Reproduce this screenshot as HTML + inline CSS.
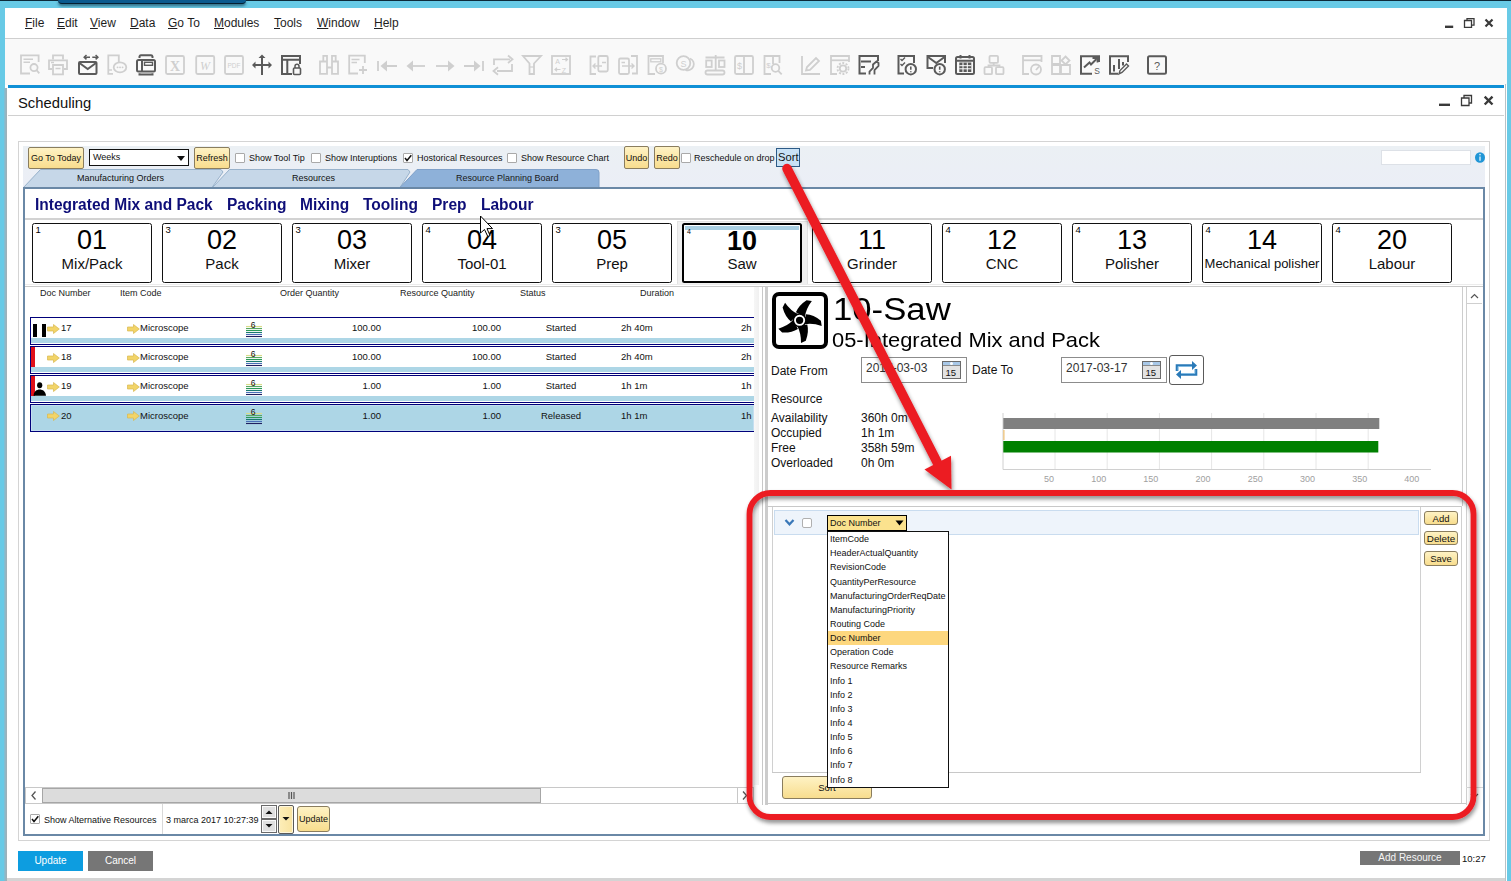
<!DOCTYPE html>
<html><head><meta charset="utf-8">
<style>
*{box-sizing:border-box;margin:0;padding:0}
html,body{width:1511px;height:881px;overflow:hidden;background:#68cae6;font-family:"Liberation Sans",sans-serif;color:#000}
.a{position:absolute}
.t{position:absolute;white-space:nowrap;line-height:1;color:#111}
.menu span{position:absolute;top:17px;font-size:12px;color:#1e1e1e;line-height:1}
.menu u{text-decoration:underline;text-underline-offset:1px;text-decoration-thickness:1px}
.ybtn{position:absolute;background:linear-gradient(#fef2c4,#f8dd8e);border:1px solid #8a7d5e;border-radius:2px;font-size:9px;text-align:center;color:#111}
.cb{position:absolute;width:10px;height:10px;border:1px solid #a9a9a9;background:#fff;border-radius:1px}
.card{position:absolute;top:223px;width:120px;height:60px;border:1px solid #111;border-radius:2.5px;background:#fff}
.card .n{position:absolute;left:2.5px;top:1px;font-size:9.5px;line-height:1}
.card .big{position:absolute;left:0;right:0;top:2.5px;text-align:center;font-size:27px;line-height:1}
.card .sub{position:absolute;left:0;right:0;top:31.5px;text-align:center;font-size:15px;line-height:1;color:#111}
.hdr{position:absolute;top:288.8px;font-size:9px;line-height:1;color:#222}
.row{position:absolute;left:30px;width:724px;height:28px;border:1px solid #00007a;border-right:none;background:#fff}
.row .strip{position:absolute;left:0;right:0;top:20px;height:5px;background:#add6e6}
.row span{position:absolute;top:7px;font-size:9px;line-height:1;color:#111}
.gt{position:absolute;top:197px;font-size:16px;font-weight:bold;color:#0e0e78;line-height:1;transform:scaleX(0.97);transform-origin:0 0;white-space:nowrap}
.rp{font-size:12px;color:#111}
.tx{font-size:9.5px;color:#111}
.lst span{position:absolute;left:830px;font-size:9px;line-height:1;color:#111}
</style></head><body>

<!-- app frame -->
<div class="a" style="left:0;top:0;width:1511px;height:1px;background:#0c2a3a"></div>
<div class="a" style="left:58px;top:0;width:188px;height:4px;background:#0b5a8e;border-radius:0 0 4px 4px;border-bottom:1px solid #042033;box-shadow:0 2px 3px rgba(0,30,50,0.55)"></div>
<div class="a" style="left:5px;top:8px;width:1501.5px;height:873px;background:#fff"></div>

<!-- menu -->
<div class="menu">
<span style="left:25px"><u>F</u>ile</span>
<span style="left:57px"><u>E</u>dit</span>
<span style="left:90px"><u>V</u>iew</span>
<span style="left:130px"><u>D</u>ata</span>
<span style="left:168px"><u>G</u>o To</span>
<span style="left:214px"><u>M</u>odules</span>
<span style="left:274px"><u>T</u>ools</span>
<span style="left:317px"><u>W</u>indow</span>
<span style="left:374px"><u>H</u>elp</span>
</div>
<div class="a" style="left:5px;top:38px;width:1502px;height:1px;background:#cfcfcf"></div>
<div class="a" style="left:5px;top:39px;width:1502px;height:46px;background:#f9f9f9"></div>
<div class="a" style="left:8px;top:85px;width:1496px;height:3px;background:#1090d6"></div>

<!-- toolbar icons placeholder -->
<svg class="a" style="left:0;top:0" width="1200" height="85" viewBox="0 0 1200 85" fill="none" stroke-linecap="butt">
<g stroke="#cfcfcf" stroke-width="1.8">
 <!-- 1 doc search -->
 <path d="M30 73.5H21V55.3H38.6V62"/><path d="M23.5 59.2H33M23.5 62.2H30" stroke-width="1.5"/>
 <circle cx="34" cy="67.6" r="3.6"/><path d="M36.6 70.2L39.3 73.3"/>
 <!-- 2 printer -->
 <path d="M53 59.5V55.3H63V59.5"/><path d="M52 69H49V60.3H67V69H64"/><path d="M53 65H63V74.3H53Z"/><path d="M55.5 68.5H60.5M51 62.5H54" stroke-width="1.4"/>
 <!-- 4 phone chat -->
 <path d="M118.8 62V55.4H108.3V73.8H113"/><path d="M108.5 70H112" stroke-width="1.4"/>
 <ellipse cx="120" cy="67.3" rx="6.3" ry="5"/><path d="M117.5 67.3h0.1M120 67.3h0.1M122.5 67.3h0.1" stroke-width="1.8" stroke-linecap="round"/>
 <!-- 6 excel -->
 <rect x="166" y="56" width="18" height="18" rx="1.5"/>
 <!-- 7 word -->
 <rect x="196.2" y="56" width="18" height="18" rx="1.5"/>
 <!-- 8 pdf -->
 <rect x="225" y="56" width="18" height="18" rx="1.5"/>
 <!-- 11 binoculars -->
 <path d="M320 61.5H327V73.8H320ZM332 61.5H338V73.8H332ZM323.3 55.8H327V61.5H323.3ZM332 55.8H335.7V61.5H332ZM327 67.5H332"/>
 <!-- 12 doc plus -->
 <path d="M358 73.5H349.2V55.6H364.8V63"/><path d="M351.5 59.5H359.5M351.5 62.5H357" stroke-width="1.5"/><path d="M359 70H367M363 66V74"/>
 <!-- 13 first -->
 <path d="M378 61V71M386 66H397"/><path d="M380.5 66L387 60.5V71.5Z" fill="#cfcfcf" stroke="none"/>
 <!-- 14 prev -->
 <path d="M412 66H425"/><path d="M406.5 66L413 60.5V71.5Z" fill="#cfcfcf" stroke="none"/>
 <!-- 15 next -->
 <path d="M436 66H449"/><path d="M454.5 66L448 60.5V71.5Z" fill="#cfcfcf" stroke="none"/>
 <!-- 16 last -->
 <path d="M464 66H475M483 61V71"/><path d="M480.5 66L474 60.5V71.5Z" fill="#cfcfcf" stroke="none"/>
 <!-- 17 refresh -->
 <path d="M494 65V59.3H510M512 64V71H497"/><path d="M508 55.5L512.5 59.3L508 63M498 67.3L493.5 71L498 74.8" />
 <!-- 18 funnel -->
 <path d="M523 56H541L534 63.5V74H529.5V63.5Z"/><path d="M529.5 67H534" stroke-width="1.2"/>
 <!-- 19 A-Z -->
 <rect x="552" y="56" width="18" height="18"/>
 <!-- 20 doc left -->
 <path d="M596 56.5H590.5V74H596"/><rect x="598.3" y="56" width="9.5" height="15.5" rx="1.5"/><path d="M593 66H602M602 62.5H606M595.5 63.5L593 66L595.5 68.5" stroke-width="1.4"/>
 <!-- 21 doc right -->
 <path d="M631 56H637V73.5H632"/><rect x="619" y="58.5" width="10" height="15.5" rx="1.5"/><path d="M622 66H634M621.5 62.5H625M631.5 63.5L634 66L631.5 68.5" stroke-width="1.4"/>
 <!-- 22 doc $ -->
 <path d="M655 74H648.5V56H663V63"/><rect x="650.8" y="58.8" width="10" height="3" stroke-width="1.3"/><circle cx="661" cy="68.7" r="5"/>
 <!-- 23 coins -->
 <circle cx="683.5" cy="63" r="6.8"/><path d="M685.5 69.8A5.5 5.5 0 1 0 690 58.5" transform="translate(0,0)"/>
 <!-- 24 scale -->
 <rect x="705.5" y="70.5" width="19" height="4" rx="2"/><path d="M715.7 55V70.5M705.5 57.5H724.5"/><rect x="706.2" y="60.5" width="5.5" height="6.5"/><rect x="719" y="60.5" width="5.5" height="6.5"/>
 <!-- 25 $ book -->
 <rect x="735" y="56" width="18" height="18" rx="1.5"/><path d="M744 56V74"/>
 <!-- 26 $ search -->
 <path d="M771 74H764.5V56H779.5V63"/><path d="M773 56V64"/><circle cx="775.5" cy="68" r="3.8"/><path d="M778.3 70.8L781.7 74.3"/>
 <!-- 27 pencil -->
 <path d="M802 56V74H820"/><path d="M806 70.5L807 67L816 58L819 61L810 70Z"/>
 <!-- 28 window gear -->
 <path d="M837 74H831V56H849V62"/><path d="M831 60.3H849"/><circle cx="843" cy="68.5" r="3.2"/><circle cx="843" cy="68.5" r="5.5" stroke-dasharray="2 1.5"/>
 <!-- 33 hierarchy -->
 <rect x="989.5" y="55.8" width="8.5" height="7" rx="1"/><rect x="984.5" y="67.2" width="7.5" height="7" rx="1"/><rect x="996" y="67.2" width="7.5" height="7" rx="1"/><path d="M993.7 63V65.5H988.5V67M993.7 65.5H999.5V67"/>
 <!-- 34 window gauge -->
 <path d="M1029 74H1023V56H1041.5V62"/><path d="M1023 60.3H1041.5"/><circle cx="1036" cy="69.5" r="5"/><path d="M1036 70L1039 66.5"/>
 <!-- 35 widgets -->
 <path d="M1052 56H1060V64H1052ZM1052 65H1060V74H1052ZM1061 65H1070V74H1061Z"/><path d="M1065.5 56.5L1069.5 60.5L1065.5 64.5L1061.5 60.5Z"/>
</g>
<g stroke="#5a5a5a" stroke-width="2">
 <!-- 3 mail -->
 <rect x="79" y="62" width="17.5" height="12" rx="1"/><path d="M79.5 63L87.7 69L96 63"/>
 <path d="M84 57.2H90M92.3 57.2H98" stroke-width="1.5"/><path d="M86.5 55L84.2 57.2L86.5 59.4M95.6 55L97.9 57.2L95.6 59.4" stroke-width="1.5"/>
 <!-- 5 preview -->
 <rect x="137" y="60" width="18" height="11.5" rx="1.5"/><path d="M142 60V71.5"/><rect x="144.5" y="62.3" width="8" height="3" stroke-width="1.4"/><path d="M139.5 58V56.5A1.5 1.5 0 0 1 141 55.3H151A1.5 1.5 0 0 1 152.5 56.5V58M139.5 73.2V74.5H152.5V73.2"/>
 <!-- 9 move -->
 <path d="M262 56V75M253 65H271"/><path d="M262 54.5L258.5 58H265.5ZM252 65L255.5 61.5V68.5ZM272 65L268.5 61.5V68.5Z" fill="#5a5a5a" stroke="none"/>
 <!-- 10 layout lock -->
 <path d="M292 74H282V56H300V64"/><path d="M282 59.8H300M287.3 59.8V74"/><rect x="293.5" y="68" width="7" height="6.5" rx="1" stroke-width="1.6"/><path d="M295 68V66.3A2 2 0 0 1 299 66.3V68" stroke-width="1.5"/>
 <!-- 29 form wrench -->
 <path d="M865 56H878V61M866 73.5H859.5V56H866M861 61.5H871M861 67H865" />
 <path d="M869.5 74.5V71.5L873 68V64.5L876.5 61.5L878.5 63V66L874.5 70V74.5" stroke-width="1.8"/>
 <!-- 30 checklist alert -->
 <path d="M904 73.5H898.5V56H914V63"/><path d="M900.5 59L902 60.5L905 57.5M900.5 64L902 65.5L905 62.5" stroke-width="1.4"/><circle cx="910.8" cy="69.2" r="5.2"/><path d="M910.8 66.5V69.8M910.8 71.2V72.2" stroke-width="1.6"/>
 <!-- 31 mail alert -->
 <path d="M933 68H927.5V56H945V63"/><path d="M928 57L936.3 63L944.5 57"/><circle cx="939.7" cy="69.2" r="5.2"/><path d="M939.7 66.5V69.8M939.7 71.2V72.2" stroke-width="1.6"/>
 <!-- 32 calendar -->
 <rect x="956" y="57" width="18" height="17" rx="1.5"/><path d="M960.5 55V58.5M969.5 55V58.5M957 60.8H973"/><rect x="959.3" y="62.5" width="12" height="9.5" fill="#5a5a5a" stroke="none"/>
 <!-- 36 chart S -->
 <path d="M1092 73.7H1081V56.2H1099V62"/><path d="M1084 67.5L1089.5 62.5L1091 64.5L1096.5 59"/><path d="M1092.5 58H1097.5V62.5" stroke-width="1.8"/>
 <!-- 37 chart edit -->
 <path d="M1118 73.7H1110V56.2H1128V62"/><path d="M1114 65V71.5M1119 59V69M1123 62V65.5"/><path d="M1119 74L1120 70.5L1126.5 64L1128.5 66L1122 72.5Z" stroke-width="1.4"/>
 <!-- 38 help -->
 <rect x="1148" y="56.2" width="18" height="17.5" rx="1.5"/>
</g>
<g font-family="Liberation Sans" text-anchor="middle">
 <text x="175" y="71" font-size="14" font-weight="bold" fill="#cfcfcf" font-family="Liberation Serif">X</text>
 <text x="205" y="70" font-size="12" font-style="italic" fill="#cfcfcf" font-family="Liberation Serif">W</text>
 <text x="234" y="68" font-size="6.5" fill="#cfcfcf">PDF</text>
 <text x="557.5" y="64" font-size="7" fill="#cfcfcf">A</text><text x="564" y="72.5" font-size="7" fill="#cfcfcf">Z</text>
 <text x="739.5" y="69" font-size="9" fill="#cfcfcf">$</text>
 <text x="768.5" y="68" font-size="8" fill="#cfcfcf">$</text>
 <text x="683.5" y="66.5" font-size="9" fill="#cfcfcf">S</text>
 <text x="661" y="71.5" font-size="7" fill="#cfcfcf">$</text>
 <text x="1097" y="74" font-size="8.5" fill="#5a5a5a">S</text>
 <text x="1157" y="69.5" font-size="11" fill="#5a5a5a">?</text>
</g>
<g stroke="#cfcfcf" stroke-width="1.2"><path d="M562 59.5H567.5M565.5 57.7L567.5 59.5L565.5 61.3M555 69.5H560.5M557 67.7L555 69.5L557 71.3"/></g>
<g stroke="#fff" stroke-width="1"><path d="M963 62.5V72M967.3 62.5V72M959.3 65.7H971.3M959.3 68.8H971.3"/></g>
</svg>


<!-- Scheduling window -->
<div class="a" style="left:7px;top:88px;width:1497px;height:790px;background:#fff"></div>
<div class="a" style="left:4px;top:88px;width:3px;height:793px;background:linear-gradient(90deg,#7cc0d8,#a6aeb2)"></div>
<div class="t" style="left:18px;top:96px;font-size:14.8px;color:#111">Scheduling</div>
<div class="a" style="left:8px;top:115px;width:1496px;height:1px;background:#d0d0d0"></div>
<div class="a" style="left:7px;top:878px;width:1498px;height:3px;background:#d4d4d4"></div><div class="a" style="left:0;top:84px;width:4px;height:797px;background:#68cae6"></div>


<!-- FORM -->
<div class="a" style="left:18px;top:141px;width:1472px;height:700px;border:1px solid #d4d4d4;background:#fff"></div>
<div class="a" style="left:23px;top:146px;width:1462px;height:42px;background:linear-gradient(#ebf0f4,#ebeef6)"></div>
<div class="ybtn" style="left:28px;top:147px;width:56px;height:22px;line-height:20px">Go To Today</div>
<div class="a" style="left:89px;top:149px;width:100px;height:17px;border:1.5px solid #111;background:#fff"></div>
<div class="t" style="left:93px;top:152.5px;font-size:9px">Weeks</div>
<div class="a" style="left:177px;top:156px;width:0;height:0;border-left:4px solid transparent;border-right:4px solid transparent;border-top:5px solid #111"></div>
<div class="ybtn" style="left:194px;top:147px;width:36px;height:22px;line-height:20px">Refresh</div>
<div class="cb" style="left:235px;top:153px"></div><div class="t" style="left:249px;top:154px;font-size:9px;color:#111">Show Tool Tip</div>
<div class="cb" style="left:311px;top:153px"></div><div class="t" style="left:325px;top:154px;font-size:9px;color:#111">Show Interuptions</div>
<div class="cb" style="left:403px;top:153px"></div><svg class="a" style="left:403px;top:153px" width="10" height="10"><path d="M2 5L4 7.5L8.3 2.3" stroke="#111" stroke-width="1.5" fill="none"/></svg><div class="t" style="left:417px;top:154px;font-size:9px;color:#111">Hostorical Resources</div>
<div class="cb" style="left:507px;top:153px"></div><div class="t" style="left:521px;top:154px;font-size:9px;color:#111">Show Resource Chart</div>
<div class="ybtn" style="left:624px;top:146px;width:25px;height:23px;line-height:23px">Undo</div>
<div class="ybtn" style="left:654px;top:146px;width:26px;height:23px;line-height:23px">Redo</div>
<div class="cb" style="left:681px;top:153px"></div><div class="t" style="left:694px;top:154px;font-size:9px;color:#111">Reschedule on drop</div>
<div class="a" style="left:776px;top:148px;width:24px;height:19px;border:1px solid #2c5a86;background:#c8e1f5"></div>
<div class="t" style="left:778px;top:152px;font-size:11.2px;color:#111">Sort</div>
<div class="a" style="left:1381px;top:150px;width:90px;height:15px;background:#fff;border:1px solid #dde1e7"></div>
<svg class="a" style="left:1474px;top:151px" width="12" height="13" viewBox="0 0 12 13"><ellipse cx="6" cy="6.5" rx="5" ry="5.3" fill="#2196d6"/><circle cx="6" cy="3.6" r="0.9" fill="#cfeaf8"/><path d="M6 5.4V9.8" stroke="#cfeaf8" stroke-width="1.5"/></svg>
<svg class="a" style="left:0;top:0" width="620" height="192" viewBox="0 0 620 192">
 <path d="M23.5 187.5L40.5 169.5H221L223 172L212 187.5Z" fill="#c6d7e8" stroke="#98b2cb" stroke-width="1"/>
 <path d="M212.5 187.5L229.5 169.5H408L410 172L400 187.5Z" fill="#c6d7e8" stroke="#98b2cb" stroke-width="1"/>
 <path d="M400 187.5L417 169.5H596A3 3 0 0 1 599 172.5V187.5Z" fill="#8eb1d9" stroke="#7fa0c8" stroke-width="1"/>
</svg>
<div class="t" style="left:77px;top:174px;font-size:9px;color:#111">Manufacturing Orders</div>
<div class="t" style="left:292px;top:174px;font-size:9px;color:#111">Resources</div>
<div class="t" style="left:456px;top:174px;font-size:9px;color:#1a1a1a">Resource Planning Board</div>
<!-- content panel -->
<div class="a" style="left:23px;top:187px;width:1462px;height:649px;border:2px solid #6a88a6;background:#fff"></div>



<!-- group titles -->
<div class="gt" style="left:35px">Integrated Mix and Pack</div>
<div class="gt" style="left:227px">Packing</div>
<div class="gt" style="left:300px">Mixing</div>
<div class="gt" style="left:363px">Tooling</div>
<div class="gt" style="left:432px">Prep</div>
<div class="gt" style="left:481px">Labour</div>
<div class="a" style="left:25px;top:218px;width:1458px;height:2px;background:#d2d2d2"></div>
<!-- cards -->
<div class="card" style="left:32px"><span class="n">1</span><div class="big">01</div><div class="sub">Mix/Pack</div></div>
<div class="card" style="left:162px"><span class="n">3</span><div class="big">02</div><div class="sub">Pack</div></div>
<div class="card" style="left:292px"><span class="n">3</span><div class="big">03</div><div class="sub">Mixer</div></div>
<div class="card" style="left:422px"><span class="n">4</span><div class="big">04</div><div class="sub">Tool-01</div></div>
<div class="card" style="left:552px"><span class="n">3</span><div class="big">05</div><div class="sub">Prep</div></div>
<div class="a" style="left:677px;top:221px;width:131px;height:64px;background:#f0f0f0;border:1px solid #e2e2e2"></div>
<div class="card" style="left:682px;border:2px solid #000;"><div class="a" style="left:1px;top:1px;right:1px;height:4px;background:#a9cfe2"></div><span class="n" style="left:3px;top:3px;font-size:7px">4</span><div class="big" style="font-weight:bold;top:3px">10</div><div class="sub" style="top:31px">Saw</div></div>
<div class="card" style="left:812px"><div class="big">11</div><div class="sub">Grinder</div></div>
<div class="card" style="left:942px"><span class="n">4</span><div class="big">12</div><div class="sub">CNC</div></div>
<div class="card" style="left:1072px"><span class="n">4</span><div class="big">13</div><div class="sub">Polisher</div></div>
<div class="card" style="left:1202px"><span class="n">4</span><div class="big">14</div><div class="sub" style="font-size:13px;top:33px">Mechanical polisher</div></div>
<div class="card" style="left:1332px"><span class="n">4</span><div class="big">20</div><div class="sub">Labour</div></div>
<div class="a" style="left:25px;top:284px;width:1458px;height:1px;background:#ececec"></div><div class="a" style="left:25px;top:285.6px;width:1458px;height:1.6px;background:#c8c8c8"></div>




<!-- table -->
<div class="hdr" style="left:40px">Doc Number</div>
<div class="hdr" style="left:120px">Item Code</div>
<div class="hdr" style="left:280px">Order Quantity</div>
<div class="hdr" style="left:400px">Resource Quantity</div>
<div class="hdr" style="left:520px">Status</div>
<div class="hdr" style="left:640px">Duration</div>

<div class="row" style="top:317px"><div class="strip"></div></div>
<svg class="a" style="left:47px;top:324px" width="13" height="10" viewBox="0 0 13 10"><defs></defs><path d="M0.5 3H6.5V0.5L12.3 5L6.5 9.5V7H0.5Z" fill="#f2d468" stroke="#d9b850" stroke-width="0.7"/></svg>
<div class="t tx" style="left:61px;top:323px">17</div>
<svg class="a" style="left:127px;top:324px" width="13" height="10" viewBox="0 0 13 10"><defs></defs><path d="M0.5 3H6.5V0.5L12.3 5L6.5 9.5V7H0.5Z" fill="#f2d468" stroke="#d9b850" stroke-width="0.7"/></svg>
<div class="t tx" style="left:140px;top:323px">Microscope</div>
<svg class="a" style="left:246px;top:322px" width="16" height="16" viewBox="0 0 16 16"><path d="M0 4.5H16" stroke="#d9dc8a" stroke-width="1.1"/><path d="M0 6.5H16" stroke="#5aa860" stroke-width="1.1"/><path d="M0 8.5H16" stroke="#2a9a58" stroke-width="1.1"/><path d="M0 10.5H16" stroke="#1a7a70" stroke-width="1.1"/><path d="M0 12.5H16" stroke="#4a70b8" stroke-width="1.1"/><path d="M0 14.5H16" stroke="#202060" stroke-width="1.1"/><text x="7.2" y="6.3" font-size="8.5" text-anchor="middle" font-family="Liberation Sans" fill="#111">6</text></svg>
<div class="t tx" style="left:280px;width:101px;text-align:right;top:323px">100.00</div>
<div class="t tx" style="left:400px;width:101px;text-align:right;top:323px">100.00</div>
<div class="t tx" style="left:521px;width:80px;text-align:center;top:323px">Started</div>
<div class="t tx" style="left:621px;top:323px">2h 40m</div>
<div class="t tx" style="left:741px;top:323px">2h</div>
<div class="row" style="top:346px"><div class="strip"></div></div>
<svg class="a" style="left:47px;top:353px" width="13" height="10" viewBox="0 0 13 10"><defs></defs><path d="M0.5 3H6.5V0.5L12.3 5L6.5 9.5V7H0.5Z" fill="#f2d468" stroke="#d9b850" stroke-width="0.7"/></svg>
<div class="t tx" style="left:61px;top:352px">18</div>
<svg class="a" style="left:127px;top:353px" width="13" height="10" viewBox="0 0 13 10"><defs></defs><path d="M0.5 3H6.5V0.5L12.3 5L6.5 9.5V7H0.5Z" fill="#f2d468" stroke="#d9b850" stroke-width="0.7"/></svg>
<div class="t tx" style="left:140px;top:352px">Microscope</div>
<svg class="a" style="left:246px;top:351px" width="16" height="16" viewBox="0 0 16 16"><path d="M0 4.5H16" stroke="#d9dc8a" stroke-width="1.1"/><path d="M0 6.5H16" stroke="#5aa860" stroke-width="1.1"/><path d="M0 8.5H16" stroke="#2a9a58" stroke-width="1.1"/><path d="M0 10.5H16" stroke="#1a7a70" stroke-width="1.1"/><path d="M0 12.5H16" stroke="#4a70b8" stroke-width="1.1"/><path d="M0 14.5H16" stroke="#202060" stroke-width="1.1"/><text x="7.2" y="6.3" font-size="8.5" text-anchor="middle" font-family="Liberation Sans" fill="#111">6</text></svg>
<div class="t tx" style="left:280px;width:101px;text-align:right;top:352px">100.00</div>
<div class="t tx" style="left:400px;width:101px;text-align:right;top:352px">100.00</div>
<div class="t tx" style="left:521px;width:80px;text-align:center;top:352px">Started</div>
<div class="t tx" style="left:621px;top:352px">2h 40m</div>
<div class="t tx" style="left:741px;top:352px">2h</div>
<div class="row" style="top:375px"><div class="strip"></div></div>
<svg class="a" style="left:47px;top:382px" width="13" height="10" viewBox="0 0 13 10"><defs></defs><path d="M0.5 3H6.5V0.5L12.3 5L6.5 9.5V7H0.5Z" fill="#f2d468" stroke="#d9b850" stroke-width="0.7"/></svg>
<div class="t tx" style="left:61px;top:381px">19</div>
<svg class="a" style="left:127px;top:382px" width="13" height="10" viewBox="0 0 13 10"><defs></defs><path d="M0.5 3H6.5V0.5L12.3 5L6.5 9.5V7H0.5Z" fill="#f2d468" stroke="#d9b850" stroke-width="0.7"/></svg>
<div class="t tx" style="left:140px;top:381px">Microscope</div>
<svg class="a" style="left:246px;top:380px" width="16" height="16" viewBox="0 0 16 16"><path d="M0 4.5H16" stroke="#d9dc8a" stroke-width="1.1"/><path d="M0 6.5H16" stroke="#5aa860" stroke-width="1.1"/><path d="M0 8.5H16" stroke="#2a9a58" stroke-width="1.1"/><path d="M0 10.5H16" stroke="#1a7a70" stroke-width="1.1"/><path d="M0 12.5H16" stroke="#4a70b8" stroke-width="1.1"/><path d="M0 14.5H16" stroke="#202060" stroke-width="1.1"/><text x="7.2" y="6.3" font-size="8.5" text-anchor="middle" font-family="Liberation Sans" fill="#111">6</text></svg>
<div class="t tx" style="left:280px;width:101px;text-align:right;top:381px">1.00</div>
<div class="t tx" style="left:400px;width:101px;text-align:right;top:381px">1.00</div>
<div class="t tx" style="left:521px;width:80px;text-align:center;top:381px">Started</div>
<div class="t tx" style="left:621px;top:381px">1h 1m</div>
<div class="t tx" style="left:741px;top:381px">1h</div>
<div class="row" style="top:404px;background:#add6e6;box-shadow:inset 0 0 0 1px #c4def0"></div>
<svg class="a" style="left:47px;top:411px" width="13" height="10" viewBox="0 0 13 10"><defs></defs><path d="M0.5 3H6.5V0.5L12.3 5L6.5 9.5V7H0.5Z" fill="#f2d468" stroke="#d9b850" stroke-width="0.7"/></svg>
<div class="t tx" style="left:61px;top:411px">20</div>
<svg class="a" style="left:127px;top:411px" width="13" height="10" viewBox="0 0 13 10"><defs></defs><path d="M0.5 3H6.5V0.5L12.3 5L6.5 9.5V7H0.5Z" fill="#f2d468" stroke="#d9b850" stroke-width="0.7"/></svg>
<div class="t tx" style="left:140px;top:411px">Microscope</div>
<svg class="a" style="left:246px;top:409px" width="16" height="16" viewBox="0 0 16 16"><path d="M0 4.5H16" stroke="#d9dc8a" stroke-width="1.1"/><path d="M0 6.5H16" stroke="#5aa860" stroke-width="1.1"/><path d="M0 8.5H16" stroke="#2a9a58" stroke-width="1.1"/><path d="M0 10.5H16" stroke="#1a7a70" stroke-width="1.1"/><path d="M0 12.5H16" stroke="#4a70b8" stroke-width="1.1"/><path d="M0 14.5H16" stroke="#202060" stroke-width="1.1"/><text x="7.2" y="6.3" font-size="8.5" text-anchor="middle" font-family="Liberation Sans" fill="#111">6</text></svg>
<div class="t tx" style="left:280px;width:101px;text-align:right;top:411px">1.00</div>
<div class="t tx" style="left:400px;width:101px;text-align:right;top:411px">1.00</div>
<div class="t tx" style="left:521px;width:80px;text-align:center;top:411px">Released</div>
<div class="t tx" style="left:621px;top:411px">1h 1m</div>
<div class="t tx" style="left:741px;top:411px">1h</div>
<div class="a" style="left:33px;top:324px;width:4px;height:13px;background:#000"></div><div class="a" style="left:42px;top:324px;width:4px;height:13px;background:#000"></div>
<div class="a" style="left:31px;top:347px;width:4px;height:20px;background:#e0101a"></div>
<div class="a" style="left:31px;top:376px;width:4px;height:20px;background:#e0101a"></div>
<svg class="a" style="left:33px;top:382px" width="14" height="14" viewBox="0 0 14 14"><ellipse cx="6.7" cy="3.3" rx="2.6" ry="3" fill="#000"/><path d="M0.5 13.8C0.8 9.5 3.5 7.5 6.7 7.5S12.6 9.5 13 13.8Z" fill="#000"/></svg>
<div class="a" style="left:754px;top:287px;width:5px;height:498px;background:linear-gradient(90deg,#f6f6f6,#f0f0f0)"></div>
<div class="a" style="left:762px;top:287px;width:1px;height:518px;background:#c8c8c8"></div>
<div class="a" style="left:765px;top:287px;width:2.5px;height:518px;background:#cccccc"></div>
<div class="a" style="left:25px;top:787px;width:729px;height:17px;border:1px solid #c8c8c8;background:#fff"></div>
<div class="a" style="left:41.5px;top:788px;width:499px;height:15px;background:#dcdcdc;border:1px solid #a6a6a6"></div>
<div class="a" style="left:737px;top:788px;width:1px;height:15px;background:#c8c8c8"></div>
<svg class="a" style="left:25px;top:787px" width="729" height="17"><path d="M10.5 4.5L7 8.5L10.5 12.5" stroke="#555" stroke-width="1.3" fill="none"/><path d="M264 5V12M266.5 5V12M269 5V12" stroke="#555" stroke-width="1.2"/><path d="M718 4.5L721.5 8.5L718 12.5" stroke="#555" stroke-width="1.3" fill="none"/></svg>


<!-- right panel -->
<div class="a" style="left:772px;top:292px;width:56px;height:57px;border:4px solid #000;border-radius:7px;background:#fff"></div>
<svg class="a" style="left:772px;top:292px" width="56" height="57" viewBox="0 0 56 57">
 <g transform="translate(27.6,28.3)" fill="#000"><path d="M6.4,-6 Q14,-5.5 21.3,0.4 L22.1,5.7 Q13,2.5 5,4 Z" transform="rotate(0)"/><path d="M6.4,-6 Q14,-5.5 21.3,0.4 L22.1,5.7 Q13,2.5 5,4 Z" transform="rotate(72)"/><path d="M6.4,-6 Q14,-5.5 21.3,0.4 L22.1,5.7 Q13,2.5 5,4 Z" transform="rotate(144)"/><path d="M6.4,-6 Q14,-5.5 21.3,0.4 L22.1,5.7 Q13,2.5 5,4 Z" transform="rotate(216)"/><path d="M6.4,-6 Q14,-5.5 21.3,0.4 L22.1,5.7 Q13,2.5 5,4 Z" transform="rotate(288)"/><circle r="7"/></g>
 <circle cx="27.6" cy="28.3" r="4.6" fill="none" stroke="#fff" stroke-width="1.9"/>
</svg>
<div class="t" style="left:833px;top:293.5px;font-size:31px;transform:scaleX(1.12);transform-origin:0 0;color:#000">10-Saw</div>
<div class="t" style="left:832px;top:330px;font-size:20.3px;transform:scaleX(1.08);transform-origin:0 0;color:#000">05-Integrated Mix and Pack</div>
<div class="t rp" style="left:771px;top:364.5px">Date From</div>
<div class="a" style="left:861px;top:357px;width:106px;height:26px;border:1px solid #8c8c8c;background:#fff"></div>
<div class="t rp" style="left:866px;top:362px;color:#333">2017-03-03</div>
<div class="t rp" style="left:972px;top:364px">Date To</div>
<div class="a" style="left:1061px;top:357px;width:106px;height:26px;border:1px solid #8c8c8c;background:#fff"></div>
<div class="t rp" style="left:1066px;top:362px;color:#333">2017-03-17</div>
<div class="a" style="left:1169px;top:355px;width:35px;height:30px;border:1px solid #5a5a5a;border-radius:3px;background:#fff"></div>
<svg class="a" style="left:1169px;top:355px" width="35" height="30" viewBox="0 0 35 30">
 <path d="M8 16V10.5H24" stroke="#2a7ab8" stroke-width="2.6" fill="none"/><path d="M23 6L28 10.5L23 15Z" fill="#2a7ab8"/>
 <path d="M27 14V19.5H11" stroke="#2a7ab8" stroke-width="2.6" fill="none"/><path d="M12 15L7 19.5L12 24Z" fill="#2a7ab8"/>
 <path d="M9 15.5V11.5H23M26 14.5V18.5H12" stroke="#8cc4ea" stroke-width="0.8" fill="none"/>
</svg>

<div class="a" style="left:942px;top:361px;width:19px;height:18px;border:1px solid #6a6a6a;background:#e2e2e2"></div>
<div class="a" style="left:943px;top:362px;width:17px;height:3.5px;background:#a8c8e8;border-bottom:1px solid #8a8a8a"></div>
<div class="a" style="left:950px;top:362px;width:3px;height:3px;border-radius:50%;background:#fff"></div>
<div class="t" style="left:945.5px;top:368px;font-size:9.5px;color:#111">15</div>
<div class="a" style="left:1142px;top:361px;width:19px;height:18px;border:1px solid #6a6a6a;background:#e2e2e2"></div>
<div class="a" style="left:1143px;top:362px;width:17px;height:3.5px;background:#a8c8e8;border-bottom:1px solid #8a8a8a"></div>
<div class="a" style="left:1150px;top:362px;width:3px;height:3px;border-radius:50%;background:#fff"></div>
<div class="t" style="left:1145.5px;top:368px;font-size:9.5px;color:#111">15</div>

<div class="t rp" style="left:771px;top:393px">Resource</div>
<div class="t rp" style="left:771px;top:411.5px">Availability</div><div class="t rp" style="left:861px;top:411.5px">360h 0m</div>
<div class="t rp" style="left:771px;top:427px">Occupied</div><div class="t rp" style="left:861px;top:427px">1h 1m</div>
<div class="t rp" style="left:771px;top:442px">Free</div><div class="t rp" style="left:861px;top:442px">358h 59m</div>
<div class="t rp" style="left:771px;top:457px">Overloaded</div><div class="t rp" style="left:861px;top:457px">0h 0m</div>

<svg class="a" style="left:995px;top:405px" width="445" height="85" viewBox="995 405 445 85"><path d="M1055.0 413V469" stroke="#e6e6e6" stroke-width="1"/><path d="M1107.2 413V469" stroke="#e6e6e6" stroke-width="1"/><path d="M1159.4 413V469" stroke="#e6e6e6" stroke-width="1"/><path d="M1211.6 413V469" stroke="#e6e6e6" stroke-width="1"/><path d="M1263.8 413V469" stroke="#e6e6e6" stroke-width="1"/><path d="M1316.0 413V469" stroke="#e6e6e6" stroke-width="1"/><path d="M1368.2 413V469" stroke="#e6e6e6" stroke-width="1"/><path d="M1003 413V469.5H1431" stroke="#d0d0d0" stroke-width="1" fill="none"/><rect x="1003.3" y="418" width="376" height="11" fill="#808080"/><rect x="1003.3" y="441" width="375" height="11.5" fill="#008000"/><rect x="1003.3" y="430" width="1.2" height="10" fill="#f0c070"/><text x="1054.0" y="482" font-size="9" text-anchor="end" font-family="Liberation Sans" fill="#a0a0a0">50</text><text x="1106.2" y="482" font-size="9" text-anchor="end" font-family="Liberation Sans" fill="#a0a0a0">100</text><text x="1158.4" y="482" font-size="9" text-anchor="end" font-family="Liberation Sans" fill="#a0a0a0">150</text><text x="1210.6" y="482" font-size="9" text-anchor="end" font-family="Liberation Sans" fill="#a0a0a0">200</text><text x="1262.8" y="482" font-size="9" text-anchor="end" font-family="Liberation Sans" fill="#a0a0a0">250</text><text x="1315.0" y="482" font-size="9" text-anchor="end" font-family="Liberation Sans" fill="#a0a0a0">300</text><text x="1367.2" y="482" font-size="9" text-anchor="end" font-family="Liberation Sans" fill="#a0a0a0">350</text><text x="1419.4" y="482" font-size="9" text-anchor="end" font-family="Liberation Sans" fill="#a0a0a0">400</text></svg>
<div class="a" style="left:1466px;top:287px;width:1px;height:518px;background:#cfcfcf"></div>
<div class="a" style="left:1461.5px;top:287px;width:1.5px;height:219px;background:#cdcdcd"></div>
<svg class="a" style="left:1467px;top:287px" width="16" height="16"><path d="M4 11L7.5 7.5L11 11" stroke="#555" stroke-width="1.2" fill="none"/></svg>
<div class="a" style="left:1466px;top:303px;width:16px;height:1px;background:#cfcfcf"></div>


<!-- sort panel -->
<div class="a" style="left:766px;top:506px;width:696px;height:1px;background:#c8c8c8"></div>
<div class="a" style="left:1461px;top:506px;width:1px;height:298px;background:#d0d0d0"></div>
<div class="a" style="left:766px;top:803px;width:700px;height:1px;background:#c8c8c8"></div>
<div class="a" style="left:772px;top:507px;width:1px;height:266px;background:#d0d0d0"></div>
<div class="a" style="left:1420px;top:507px;width:1px;height:266px;background:#d0d0d0"></div>
<div class="a" style="left:772px;top:772px;width:649px;height:1px;background:#c8c8c8"></div>
<div class="a" style="left:774px;top:510px;width:645px;height:25px;background:#eef4fb;border:1px solid #c9dcef"></div>
<svg class="a" style="left:784px;top:518px" width="11" height="9"><path d="M1.5 2L5.5 6.3L9.5 2" stroke="#3a78b8" stroke-width="2.2" fill="none"/></svg>
<div class="a" style="left:802px;top:518px;width:10px;height:10px;border:1px solid #b0b0b0;border-radius:2px;background:#fff"></div>
<div class="a" style="left:827px;top:515px;width:80px;height:16px;border:1.5px solid #000;background:#fbe28e"></div>
<div class="t" style="left:830px;top:518.7px;font-size:9px;color:#111">Doc Number</div>
<svg class="a" style="left:895px;top:520px" width="9" height="6"><path d="M0.5 0.5H8.5L4.5 5.5Z" fill="#000"/></svg>
<div class="ybtn" style="left:1424px;top:511px;width:34px;height:14px;line-height:13px;border-radius:3px;font-size:9.5px">Add</div>
<div class="ybtn" style="left:1424px;top:531px;width:34px;height:14px;line-height:13px;border-radius:3px;font-size:9.8px">Delete</div>
<div class="ybtn" style="left:1424px;top:551px;width:34px;height:15px;line-height:14px;border-radius:3px;font-size:9.5px">Save</div>
<div class="ybtn" style="left:782px;top:776px;width:90px;height:23px;line-height:21px;border-radius:3px;font-size:9.5px">Sort</div>
<div class="a" style="left:1466px;top:787px;width:17px;height:1px;background:#d8d8d8"></div>
<svg class="a" style="left:1467px;top:788px" width="16" height="16"><path d="M4 6L7.5 9.5L11 6" stroke="#555" stroke-width="1.2" fill="none"/></svg>
<!-- dropdown list -->
<div class="a" style="left:827px;top:531px;width:122px;height:257px;border:1px solid #111;background:#fff"></div>
<div class="a" style="left:828px;top:631px;width:120px;height:14px;background:#fdd77e"></div>

<div class="t" style="left:830px;top:535.0px;font-size:9px;color:#111">ItemCode</div>
<div class="t" style="left:830px;top:549.1px;font-size:9px;color:#111">HeaderActualQuantity</div>
<div class="t" style="left:830px;top:563.3px;font-size:9px;color:#111">RevisionCode</div>
<div class="t" style="left:830px;top:577.5px;font-size:9px;color:#111">QuantityPerResource</div>
<div class="t" style="left:830px;top:591.6px;font-size:9px;color:#111">ManufacturingOrderReqDate</div>
<div class="t" style="left:830px;top:605.8px;font-size:9px;color:#111">ManufacturingPriority</div>
<div class="t" style="left:830px;top:619.9px;font-size:9px;color:#111">Routing Code</div>
<div class="t" style="left:830px;top:634.0px;font-size:9px;color:#111">Doc Number</div>
<div class="t" style="left:830px;top:648.2px;font-size:9px;color:#111">Operation Code</div>
<div class="t" style="left:830px;top:662.4px;font-size:9px;color:#111">Resource Remarks</div>
<div class="t" style="left:830px;top:676.5px;font-size:9px;color:#111">Info 1</div>
<div class="t" style="left:830px;top:690.6px;font-size:9px;color:#111">Info 2</div>
<div class="t" style="left:830px;top:704.8px;font-size:9px;color:#111">Info 3</div>
<div class="t" style="left:830px;top:719.0px;font-size:9px;color:#111">Info 4</div>
<div class="t" style="left:830px;top:733.1px;font-size:9px;color:#111">Info 5</div>
<div class="t" style="left:830px;top:747.2px;font-size:9px;color:#111">Info 6</div>
<div class="t" style="left:830px;top:761.4px;font-size:9px;color:#111">Info 7</div>
<div class="t" style="left:830px;top:775.5px;font-size:9px;color:#111">Info 8</div>

<!-- footer -->
<div class="cb" style="left:30px;top:814px"></div><svg class="a" style="left:30px;top:814px" width="10" height="10"><path d="M2 5L4 7.5L8.3 2.3" stroke="#111" stroke-width="1.5" fill="none"/></svg>
<div class="t" style="left:44px;top:815.5px;font-size:9px;color:#111">Show Alternative Resources</div>
<div class="a" style="left:162px;top:804px;width:100px;height:30px;border-left:1px solid #d8d8d8;background:#fff"></div>
<div class="t" style="left:166px;top:815.5px;font-size:9px;color:#111">3 marca 2017 10:27:39</div>
<div class="a" style="left:261px;top:805px;width:16px;height:14px;border:1px solid #6a6a6a;background:#e0e0e0;box-shadow:inset 0 0 0 1px #fafafa"></div>
<div class="a" style="left:261px;top:819px;width:16px;height:14px;border:1px solid #6a6a6a;background:#e0e0e0;box-shadow:inset 0 0 0 1px #fafafa"></div>
<svg class="a" style="left:261px;top:805px" width="16" height="28"><path d="M4.5 9L8 5.5L11.5 9Z" fill="#111"/><path d="M4.5 19L8 22.5L11.5 19Z" fill="#111"/></svg>
<div class="a" style="left:278px;top:805px;width:16px;height:29px;border:1px solid #5a5a5a;border-radius:2px;background:linear-gradient(90deg,#fdeeb8,#f9e3a0);box-shadow:inset 0 0 0 1px #fdf6dc"></div>
<svg class="a" style="left:278px;top:805px" width="16" height="28"><path d="M4.5 12L8 15.5L11.5 12Z" fill="#111"/></svg>
<div class="ybtn" style="left:297px;top:806px;width:33px;height:26px;line-height:24px;border-radius:3px">Update</div>
<div class="a" style="left:18px;top:851px;width:65px;height:20px;background:#0d9de0"></div>
<div class="t" style="left:18px;top:856px;width:65px;text-align:center;font-size:10px;color:#fff">Update</div>
<div class="a" style="left:88px;top:851px;width:65px;height:20px;background:#767676"></div>
<div class="t" style="left:88px;top:856px;width:65px;text-align:center;font-size:10px;color:#fff">Cancel</div>
<div class="a" style="left:1360px;top:851px;width:100px;height:14px;background:#767676"></div>
<div class="t" style="left:1360px;top:853px;width:100px;text-align:center;font-size:10px;color:#f4f4f4">Add Resource</div>
<div class="t" style="left:1462px;top:854px;font-size:9.5px;color:#111">10:27</div>


<svg class="a" style="left:0;top:0" width="1511" height="881" viewBox="0 0 1511 881">
 <defs><filter id="sh" x="-10%" y="-10%" width="130%" height="130%"><feGaussianBlur in="SourceAlpha" stdDeviation="2.2"/><feOffset dx="1" dy="3"/><feComponentTransfer><feFuncA type="linear" slope="0.45"/></feComponentTransfer><feMerge><feMergeNode/><feMergeNode in="SourceGraphic"/></feMerge></filter></defs>
 <g filter="url(#sh)">
  <rect x="749.5" y="493" width="724" height="324" rx="21" fill="none" stroke="#ec1b24" stroke-width="5.8"/>
  <path d="M787 168.5L937 462" stroke="#ec1b24" stroke-width="9.5" stroke-linecap="round"/>
  <path d="M924.5 469.5L951 455.8L951.5 489.5Z" fill="#ec1b24"/>
 </g>
</svg>


<svg class="a" style="left:1430px;top:10px" width="81" height="110" viewBox="1430 10 81 110">
 <g stroke="#3a3a3a" fill="none">
  <path d="M1445 26.8H1453.2" stroke-width="2.4"/>
  <path d="M1464.5 20.5H1471.5V27.3H1464.5Z" stroke-width="1.3"/><path d="M1467 20.5V18.6H1474V25.2H1471.5" stroke-width="1.3"/>
  <path d="M1485.5 19.5L1492.5 26.5M1492.5 19.5L1485.5 26.5" stroke-width="2.2"/>
  <path d="M1439 104.8H1450" stroke-width="2.4"/>
  <path d="M1461.5 98H1469V105.5H1461.5Z" stroke-width="1.3"/><path d="M1464 98V95.5H1471.5V103H1469" stroke-width="1.3"/>
  <path d="M1484.7 96.7L1492.5 104.5M1492.5 96.7L1484.7 104.5" stroke-width="2.4"/>
 </g>
</svg>
<div class="a" style="left:1504.8px;top:84px;width:1.7px;height:797px;background:linear-gradient(90deg,#c8c8c8,#a8bcc4)"></div>
<svg class="a" style="left:479px;top:215px" width="16" height="24" viewBox="-1.5 -1 16 24">
 <path d="M0 0L0 17L4 13.5L7.3 20.5L9.5 19.5L6.5 12.6L12 12.6Z" fill="#fff" stroke="#000" stroke-width="1" stroke-linejoin="miter"/>
</svg>

</body></html>
